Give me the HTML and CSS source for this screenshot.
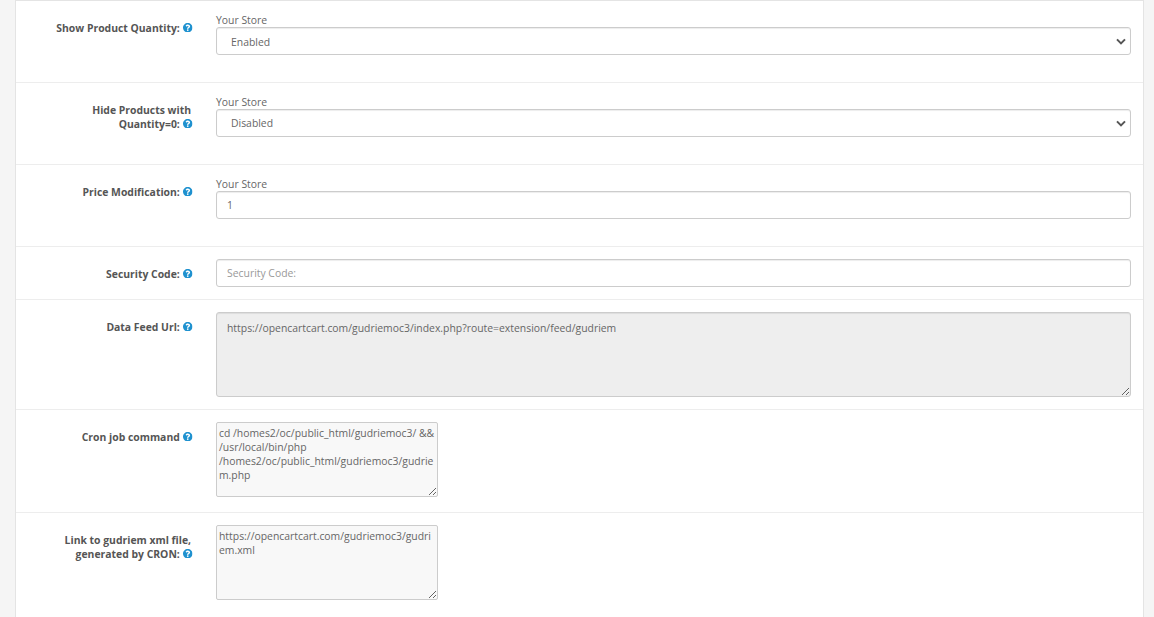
FILE: index.html
```html
<!DOCTYPE html>
<html lang="en">
<head>
<meta charset="utf-8">
<title>Settings</title>
<link rel="stylesheet" href="styles.css">
</head>
<body>
<svg class="defs" width="0" height="0" aria-hidden="true"><defs>
<symbol id="q" viewBox="8 8 496 496"><path d="M504 256c0 136.997-111.043 248-248 248S8 392.997 8 256C8 119.083 119.043 8 256 8s248 111.083 248 248zM262.655 90c-54.497 0-89.255 22.957-116.549 63.758-3.536 5.286-2.353 12.415 2.715 16.258l34.699 26.31c5.205 3.947 12.621 3.008 16.665-2.122 17.864-22.658 30.113-35.797 57.303-35.797 20.429 0 45.698 13.148 45.698 32.958 0 14.976-12.363 22.667-32.534 33.976C247.128 238.528 216 254.941 216 296v4c0 6.627 5.373 12 12 12h56c6.627 0 12-5.373 12-12v-1.333c0-28.462 83.186-29.647 83.186-106.667 0-58.002-60.165-102-116.531-102zM256 338c-25.365 0-46 20.635-46 46 0 25.364 20.635 46 46 46s46-20.636 46-46c0-25.365-20.635-46-46-46z"/></symbol>
<symbol id="chev" viewBox="0 0 12 8"><path d="M1.2 1.4 6 6.2l4.8-4.8" fill="none" stroke="currentColor" stroke-width="2.4"/></symbol>
</defs></svg>
<main class="panel">
  <div class="row row-store">
    <label class="lbl">Show Product Quantity: <svg class="help"><use href="#q"/></svg></label>
    <div class="field">
      <div class="store">Your Store</div>
      <div class="select-wrap">
        <select class="control select select-low"><option>Enabled</option><option>Disabled</option></select>
        <svg class="chev"><use href="#chev"/></svg>
      </div>
    </div>
  </div>
  <div class="row row-store">
    <label class="lbl">Hide Products with Quantity=0: <svg class="help"><use href="#q"/></svg></label>
    <div class="field">
      <div class="store">Your Store</div>
      <div class="select-wrap">
        <select class="control select"><option>Disabled</option><option>Enabled</option></select>
        <svg class="chev"><use href="#chev"/></svg>
      </div>
    </div>
  </div>
  <div class="row row-store">
    <label class="lbl">Price Modification: <svg class="help"><use href="#q"/></svg></label>
    <div class="field">
      <div class="store">Your Store</div>
      <input class="control" type="text" value="1">
    </div>
  </div>
  <div class="row">
    <label class="lbl">Security Code: <svg class="help"><use href="#q"/></svg></label>
    <div class="field">
      <input class="control" type="text" placeholder="Security Code:">
    </div>
  </div>
  <div class="row">
    <label class="lbl">Data Feed Url: <svg class="help"><use href="#q"/></svg></label>
    <div class="field">
      <textarea class="control feed" readonly>https://opencartcart.com/gudriemoc3/index.php?route=extension/feed/gudriem</textarea>
    </div>
  </div>
  <div class="row row-small">
    <label class="lbl">Cron job command <svg class="help"><use href="#q"/></svg></label>
    <div class="field">
      <textarea class="small" readonly>cd /homes2/oc/public_html/gudriemoc3/ &amp;&amp; /usr/local/bin/php /homes2/oc/public_html/gudriemoc3/gudriem.php</textarea>
    </div>
  </div>
  <div class="row row-small">
    <label class="lbl">Link to gudriem xml file, generated by CRON: <svg class="help"><use href="#q"/></svg></label>
    <div class="field">
      <textarea class="small" readonly>https://opencartcart.com/gudriemoc3/gudriem.xml</textarea>
    </div>
  </div>
</main>
</body>
</html>
```
FILE: styles.css
```css
* { box-sizing: border-box; }
html, body { height: 100%; }
body {
  margin: 0;
  padding: 0 10px 0 15px;
  background: #f5f5f5;
  color: #666;
  font: 10.4px/14px "Open Sans", sans-serif;
  overflow: hidden;
}
.defs { position: absolute; }
.panel {
  min-height: 617px;
  background: #fff;
  border: 1px solid #e4e4e4;
  border-bottom: 0;
}
.row {
  display: flex;
  padding: 12px 12px 12px 0;
  border-top: 1px solid #ededed;
}
.row:first-child { border-top: 0; }
.row-store { padding-bottom: 27px; }
.row-small { padding-bottom: 15px; }
.lbl {
  flex: 0 0 200px;
  padding: 8px 25px 0 15px;
  margin: 0;
  text-align: right;
  font-weight: 700;
  color: #555;
}
.help { width: 9.5px; height: 9.5px; margin: 0 -1.5px 0 .5px; vertical-align: 0; fill: #1e91cf; }
.field { flex: 1; min-width: 0; }
.store { height: 14px; color: #666; }
.control {
  display: block;
  width: 100%;
  height: 28px;
  padding: 0 10px;
  border: 1px solid #ccc;
  border-radius: 3px;
  background: #fff;
  box-shadow: inset 0 1px 1px rgba(0,0,0,.075);
  color: #666;
  font: inherit;
  outline: 0;
}
.control::placeholder { color: #999; opacity: 1; }
.select-wrap { position: relative; }
.select { appearance: none; padding-left: 14px; }
.select-low { padding-top: 2px; }
.chev { position: absolute; right: 5px; top: 11px; width: 10px; height: 7px; color: #555; pointer-events: none; }
.feed {
  height: 85px;
  padding: 8px 10px;
  background: #eee;
  line-height: 14px;
  resize: vertical;
}
.small {
  display: block;
  width: 222px;
  height: 75px;
  padding: 3px 2px;
  border: 1px solid #ccc;
  border-radius: 2px;
  background: #f8f8f8;
  color: #666;
  font: inherit;
  outline: 0;
}
```
